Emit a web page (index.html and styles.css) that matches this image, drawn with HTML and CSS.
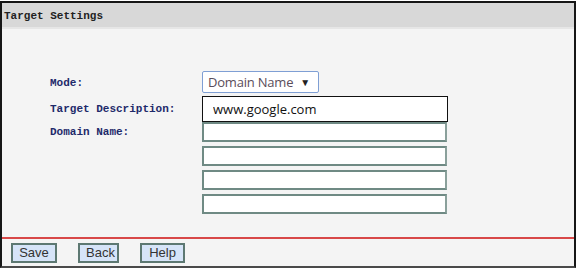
FILE: index.html
```html
<!DOCTYPE html>
<html lang="en">

<head>
  <meta charset="UTF-8">
  <title>Target Settings</title>
  <link rel="stylesheet" href="styles.css">
</head>

<body>
  <div class="panel">
    <div class="panel-title">Target Settings</div>

    <div class="panel-body">
      <div class="form-grid">
        <label class="field-label label-mode">Mode:</label>
        <div class="field">
          <div class="select-box">
            <span class="select-text">Domain Name</span>
            <span class="select-arrow">&#9660;</span>
          </div>
        </div>

        <label class="field-label label-desc">Target Description:</label>
        <div class="field">
          <input class="text-box text-main" type="text" value="www.google.com">
        </div>

        <label class="field-label label-domain">Domain Name:</label>
        <div class="field field-list">
          <input class="text-box" type="text">
          <input class="text-box" type="text">
          <input class="text-box" type="text">
          <input class="text-box" type="text">
        </div>
      </div>
    </div>

    <div class="panel-foot">
      <button class="btn btn-save">Save</button>
      <button class="btn btn-back">Back</button>
      <button class="btn btn-help">Help</button>
    </div>
  </div>
</body>

</html>
```

FILE: styles.css
```css
*{margin: 0; padding: 0; box-sizing: border-box;}
body{background-color: #fff;}

.panel{
  width: 576px;
  height: 267px;
  margin-top: 1px;
  border: 2px solid #161616;
  border-bottom: 2px solid #4a4a4a;
  background-color: #f4f4f4;
  display: flex;
  flex-direction: column;
}

/*제목*/
.panel-title{
  height: 26px;
  line-height: 26px;
  padding-left: 2px;
  background-color: #d8d8d8;
  border-bottom: 2px solid #e6e6e6;
  font-family: "Liberation Mono", monospace;
  font-size: 11px;
  font-weight: bold;
  color: #222;
}

/*폼*/
.panel-body{
  flex: 1;
  padding: 42px 0 0 48px;
  border-bottom: 2px solid #d84848;
}
.form-grid{
  display: grid;
  grid-template-columns: 152px 246px;
  align-items: start;
}
.field-label{
  font-family: "Liberation Mono", monospace;
  font-size: 11px;
  font-weight: bold;
  color: #1e2a6a;
  line-height: 22px;
}
.label-mode{
  margin-top: 1px;
}
.label-desc{
  margin-top: 4px;
}
.label-domain{
  margin-top: 1px;
  line-height: 19px;
}

.select-box{
  width: 117px;
  height: 22px;
  border: 1px solid #7f9fd4;
  border-radius: 2px;
  background-color: #fff;
  display: flex;
  align-items: center;
  justify-content: space-between;
  padding: 0 8px 0 5px;
  font-family: "Open Sans", sans-serif;
  font-size: 13px;
  letter-spacing: -0.2px;
  color: #5a4d5a;
}
.select-arrow{
  font-size: 10px;
  color: #222;
}

.text-box{
  display: block;
  width: 245px;
  height: 20px;
  border: 2px solid #6f8a84;
  border-right-color: #8aa09b;
  background-color: #fff;
  outline: none;
}
.text-main{
  width: 246px;
  height: 26px;
  margin-top: 2px;
  border: 1px solid #111;
  padding-left: 10px;
  font-family: "Open Sans", sans-serif;
  font-size: 13px;
  color: #111;
}
.field-list{
  display: flex;
  flex-direction: column;
  gap: 4px;
}

/*버튼*/
.panel-foot{
  height: 27px;
  display: flex;
  align-items: center;
  gap: 21px;
  padding-left: 9px;
}
.btn{
  height: 20px;
  padding: 0 6px;
  border: 2px solid #5d7872;
  background-color: #d6e4f8;
  font-family: "Liberation Sans", Arial, sans-serif;
  font-size: 13px;
  color: #333;
}
.btn-save{width: 46px;}
.btn-back{width: 41px;}
.btn-help{width: 45px;}
```
